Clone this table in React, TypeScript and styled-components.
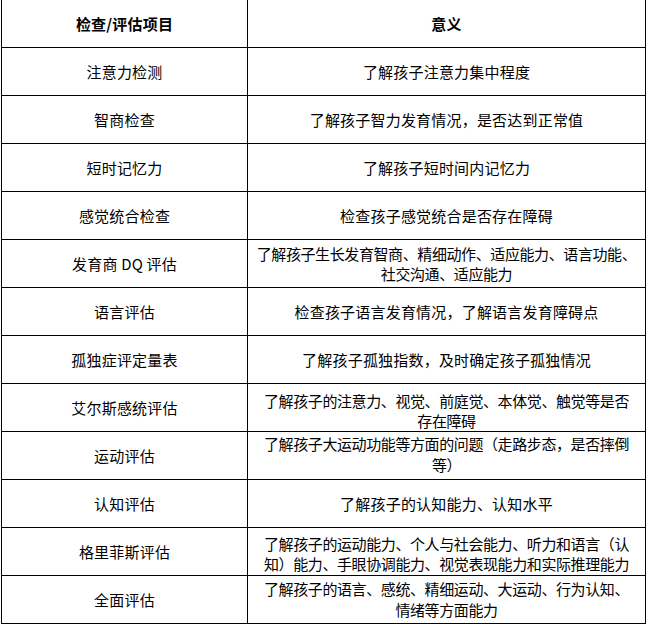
import styled, { createGlobalStyle } from 'styled-components';

const GlobalStyle = createGlobalStyle`
  * {
    box-sizing: border-box;
  }
  body {
    margin: 0;
    background: #fff;
    font-family: 'Noto Sans CJK SC', 'Liberation Sans', sans-serif;
    color: #000;
  }
`;

const Table = styled.div`
  display: grid;
  grid-template-columns: 246px 398px;
  width: 645px;
  margin-left: 1px;
  border-left: 1px solid #000;
`;

const Cell = styled.div<{ $head?: boolean; $dense?: boolean; $lh?: number; $shift?: number }>`
  display: flex;
  align-items: center;
  justify-content: center;
  height: 48px;
  overflow: hidden;
  border-right: 1px solid #000;
  border-bottom: 1px solid #000;
  font-size: 15px;
  letter-spacing: ${p => (p.$dense ? '-0.4px' : '0.2px')};
  line-height: ${p => p.$lh ?? 20}px;
  font-weight: ${p => (p.$head ? 700 : 400)};
  text-align: center;
  white-space: nowrap;
  padding-top: ${p => (p.$shift && p.$shift > 0 ? p.$shift * 2 : 0)}px;
  padding-bottom: ${p => (p.$shift && p.$shift < 0 ? -p.$shift * 2 : 0)}px;
`;

const Lines = styled.span`
  display: block;
`;

interface IRow {
  item: string;
  meaning: string[];
  lh?: number;
  shift?: number;
}

const rows: IRow[] = [
  { item: '注意力检测', meaning: ['了解孩子注意力集中程度'] },
  { item: '智商检查', meaning: ['了解孩子智力发育情况，是否达到正常值'] },
  { item: '短时记忆力', meaning: ['了解孩子短时间内记忆力'] },
  { item: '感觉统合检查', meaning: ['检查孩子感觉统合是否存在障碍'] },
  {
    item: '发育商 DQ 评估',
    meaning: ['了解孩子生长发育智商、精细动作、适应能力、语言功能、', '社交沟通、适应能力'],
  },
  { item: '语言评估', meaning: ['检查孩子语言发育情况，了解语言发育障碍点'] },
  { item: '孤独症评定量表', meaning: ['了解孩子孤独指数，及时确定孩子孤独情况'] },
  {
    item: '艾尔斯感统评估',
    meaning: ['了解孩子的注意力、视觉、前庭觉、本体觉、触觉等是否', '存在障碍'],
    shift: 3,
  },
  {
    item: '运动评估',
    meaning: ['了解孩子大运动功能等方面的问题（走路步态，是否摔倒', '等）'],
    lh: 21,
    shift: -2,
  },
  { item: '认知评估', meaning: ['了解孩子的认知能力、认知水平'] },
  {
    item: '格里菲斯评估',
    meaning: ['了解孩子的运动能力、个人与社会能力、听力和语言（认', '知）能力、手眼协调能力、视觉表现能力和实际推理能力'],
    shift: 2,
  },
  {
    item: '全面评估',
    meaning: ['了解孩子的语言、感统、精细运动、大运动、行为认知、', '情绪等方面能力'],
    lh: 21,
    shift: -1,
  },
];

const App = () => {
  return (
    <>
      <GlobalStyle />
      <Table>
        <Cell $head>检查/评估项目</Cell>
        <Cell $head>意义</Cell>
        {rows.map(row => (
          <>
            <Cell key={row.item}>{row.item}</Cell>
            <Cell
              key={row.item + '-m'}
              $dense={row.meaning.length > 1}
              $lh={row.lh}
              $shift={row.shift}
            >
              <Lines>
                {row.meaning.map((line, i) => (
                  <span key={i}>
                    {i > 0 && <br />}
                    {line}
                  </span>
                ))}
              </Lines>
            </Cell>
          </>
        ))}
      </Table>
    </>
  );
};

export default App;
